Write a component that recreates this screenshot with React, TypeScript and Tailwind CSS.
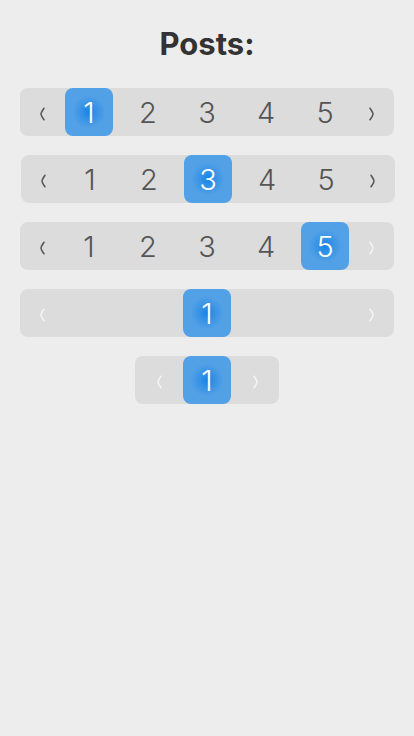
import React from 'react';

type Row = {
  pages: number[];
  active: number;
  prevOn: boolean;
  nextOn: boolean;
  full: boolean;
  shift?: boolean;
};

const rows: Row[] = [
  { pages: [1, 2, 3, 4, 5], active: 1, prevOn: true, nextOn: true, full: true },
  { pages: [1, 2, 3, 4, 5], active: 3, prevOn: true, nextOn: true, full: true, shift: true },
  { pages: [1, 2, 3, 4, 5], active: 5, prevOn: true, nextOn: false, full: true },
  { pages: [1], active: 1, prevOn: false, nextOn: false, full: true },
  { pages: [1], active: 1, prevOn: false, nextOn: false, full: false },
];

function Chevron({ dir, on }: { dir: 'left' | 'right'; on: boolean }) {
  return (
    <svg
      width="7"
      height="14"
      viewBox="0 0 7 14"
      className={'mt-[4px] ' + (on ? 'text-[#555555]' : 'text-[#f4f4f4]')}
      fill="none"
      stroke="currentColor"
      strokeWidth="1.5"
      strokeLinecap="round"
    >
      {dir === 'left' ? (
        <path d="M5 1.2 Q2 5.5 2 7 Q2 8.5 5 12.8" />
      ) : (
        <path d="M2 1.2 Q5 5.5 5 7 Q5 8.5 2 12.8" />
      )}
    </svg>
  );
}

function PageBox({ n, active }: { n: number; active: boolean }) {
  return (
    <div
      className={
        'flex h-12 w-12 items-center justify-center rounded-lg text-[29px] font-light leading-none ' +
        (active
          ? 'bg-[radial-gradient(circle,#1683ea_0%,#3592e6_22%,#52a0e6_48%)] text-white'
          : 'text-[#555555]')
      }
    >
      {n}
    </div>
  );
}

function Pager({ row }: { row: Row }) {
  if (!row.full) {
    return (
      <div className="mx-auto flex h-12 w-[144px] items-center rounded-lg bg-[#dcdcdc]">
        <div className="flex h-12 w-12 items-center justify-center">
          <Chevron dir="left" on={row.prevOn} />
        </div>
        <PageBox n={1} active />
        <div className="flex h-12 w-12 items-center justify-center">
          <Chevron dir="right" on={row.nextOn} />
        </div>
      </div>
    );
  }
  return (
    <div className={'flex h-12 w-[374px] items-center rounded-lg bg-[#dcdcdc] ' + (row.shift ? 'ml-[21px]' : 'ml-[20px]')}>
      <div className="flex h-12 w-[45px] items-center justify-center">
        <Chevron dir="left" on={row.prevOn} />
      </div>
      <div className="flex flex-1 justify-center gap-[11px]">
        {row.pages.map((p) => (
          <PageBox key={p} n={p} active={p === row.active} />
        ))}
      </div>
      <div className="flex h-12 w-[45px] items-center justify-center">
        <Chevron dir="right" on={row.nextOn} />
      </div>
    </div>
  );
}

export default function App() {
  return (
    <div className="min-h-[736px] w-full bg-[#ededed] pt-[29px] font-['Inter',sans-serif]">
      <h1 className="text-center text-[31px] font-bold leading-[30px] text-[#333333]">Posts:</h1>
      <div className="mt-[29px] flex flex-col gap-[19px]">
        {rows.map((r, i) => (
          <Pager key={i} row={r} />
        ))}
      </div>
    </div>
  );
}
